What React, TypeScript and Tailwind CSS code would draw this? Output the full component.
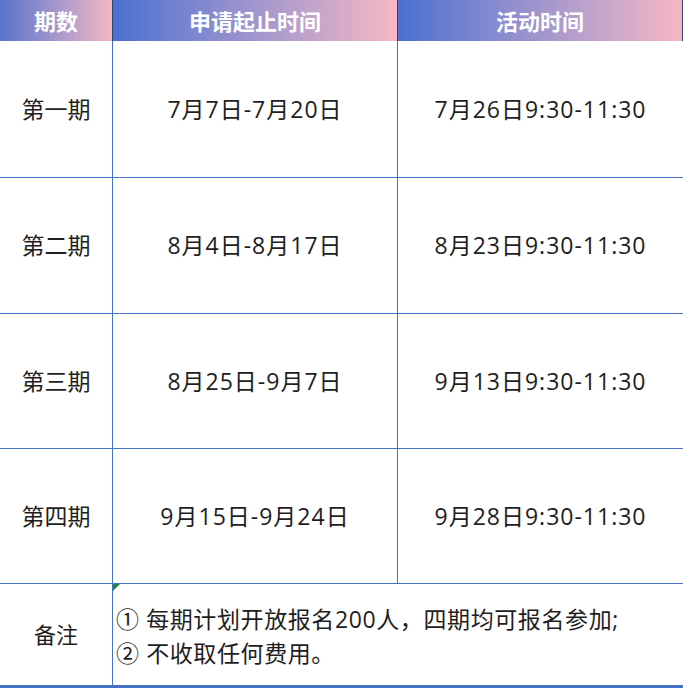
import React from "react";

const rows = [
  { name: "第一期", apply: "7月7日-7月20日", act: "7月26日9:30-11:30", h: "h-[137px]" },
  { name: "第二期", apply: "8月4日-8月17日", act: "8月23日9:30-11:30", h: "h-[136px]" },
  { name: "第三期", apply: "8月25日-9月7日", act: "9月13日9:30-11:30", h: "h-[135px]" },
  { name: "第四期", apply: "9月15日-9月24日", act: "9月28日9:30-11:30", h: "h-[135px]" },
];

export default function App() {
  return (
    <div className="w-[683px] h-[688px] bg-white text-[#1e1e1e] font-['Open_Sans','Noto_Sans_CJK_SC',sans-serif] overflow-hidden">
      <div className="grid grid-cols-[112px_285px_1fr] h-[41px] text-white font-bold text-[22px] font-['Noto_Sans_CJK_SC',sans-serif]">
        <div className="flex items-center justify-center bg-gradient-to-r from-[#5872cc] to-[#f4b6c4]">期数</div>
        <div className="flex items-center justify-center bg-gradient-to-r from-[#4a6fd0] to-[#f6b7c3] border-l border-[#2f4379]">申请起止时间</div>
        <div className="flex items-center justify-center bg-gradient-to-r from-[#4a6fd0] to-[#f6b7c3] border-l border-r border-[#2f4379]">活动时间</div>
      </div>
      {rows.map((r) => (
        <div key={r.name} className={`grid grid-cols-[112px_285px_1fr] ${r.h} border-b border-[#4472c4] text-[23px]`}>
          <div className="flex items-center justify-center">{r.name}</div>
          <div className="flex items-center justify-center border-l border-[#4472c4] tracking-[1px]">{r.apply}</div>
          <div className="flex items-center justify-center border-l border-[#4472c4] tracking-[1px]">{r.act}</div>
        </div>
      ))}
      <div className="grid grid-cols-[112px_1fr] h-[104px] border-b-[3px] border-[#4472c4] text-[23px]">
        <div className="flex items-center justify-center text-[22px]">备注</div>
        <div className="relative flex flex-col justify-center pl-[3px] pt-[2px] border-l border-[#4472c4] leading-[34px] tracking-[0.6px]">
          <div className="absolute left-0 top-0 w-0 h-0 border-t-[7px] border-r-[7px] border-t-[#1f8a3a] border-r-transparent" />
          <div>① 每期计划开放报名200人，四期均可报名参加;</div>
          <div>② 不收取任何费用。</div>
        </div>
      </div>
    </div>
  );
}
